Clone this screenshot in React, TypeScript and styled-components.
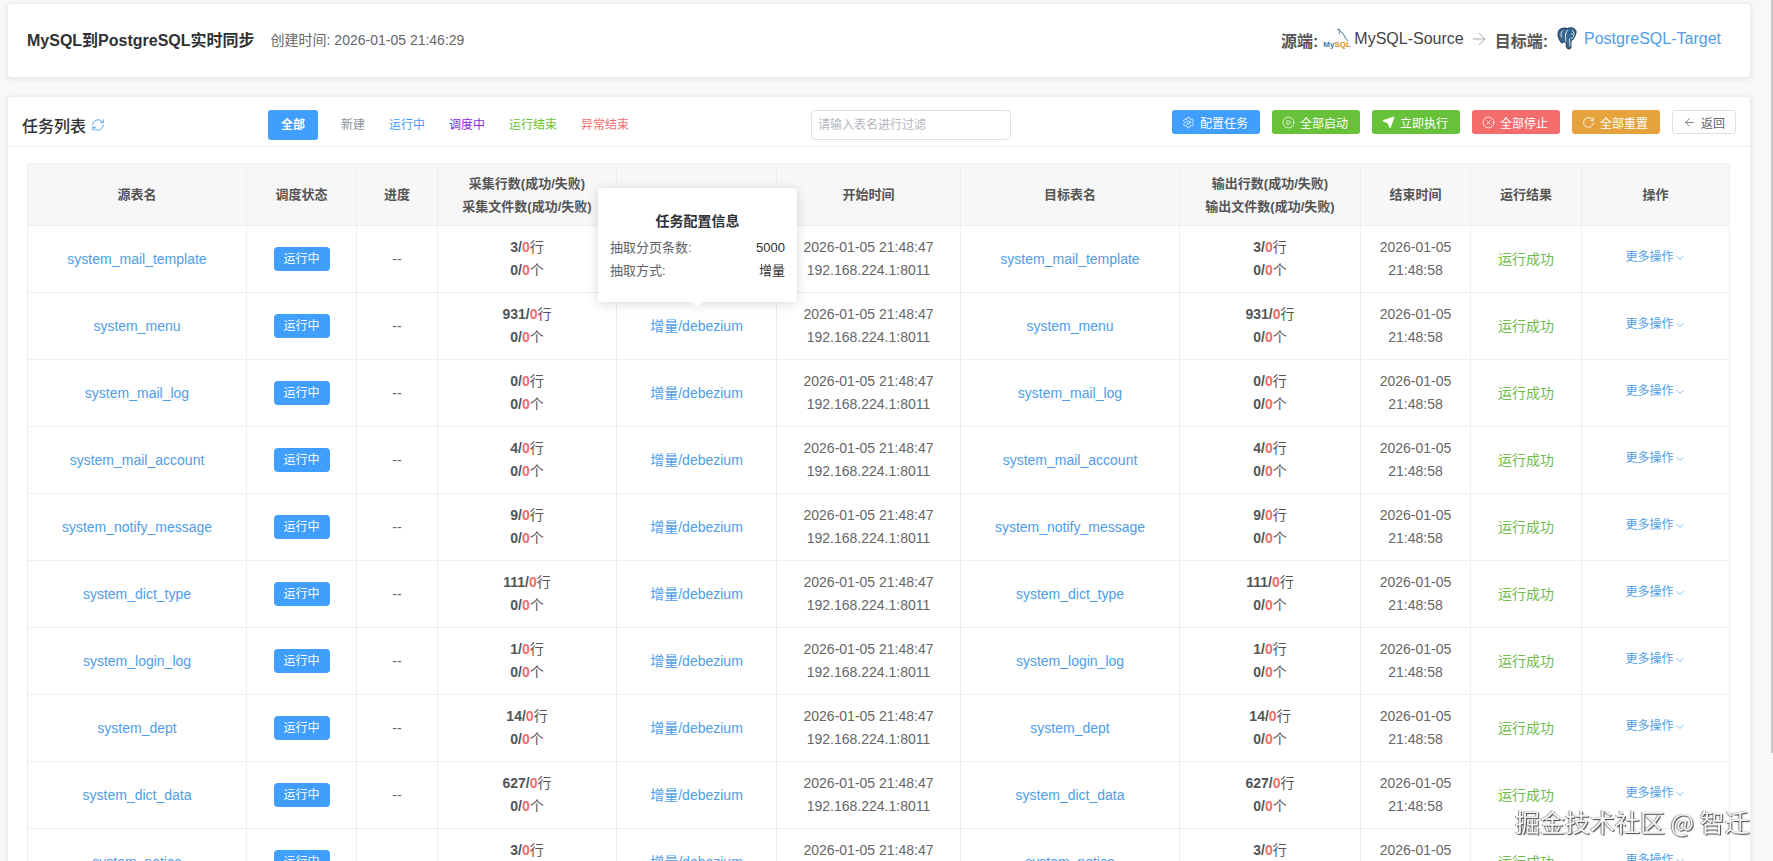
import React from "react";
import styled, { createGlobalStyle } from "styled-components";
import { Settings, CirclePlay, Send, CircleX, RotateCw, ArrowLeft, RefreshCw, ChevronDown, ArrowRight } from "lucide-react";

const Global = createGlobalStyle`
  html, body { margin: 0; height: 100%; overflow: hidden; background: #f8f8f8; }
  body { font-family: "Liberation Sans", "Noto Sans CJK SC", sans-serif; font-size: 14px; color: #606266; }
`;

const Page = styled.div`
  height: 861px; overflow: hidden; padding: 3px 22px 0 7px; display: flex; flex-direction: column; gap: 18px; box-sizing: border-box;
`;
const Card = styled.section`
  background: #fff; border: 1px solid #ebeef5; border-radius: 4px; box-shadow: 0 1px 5px rgba(0,0,0,.09); flex: none;
`;
const TopBar = styled(Card)`
  height: 75px; box-sizing: border-box; display: flex; align-items: center; justify-content: space-between; padding: 0 29px 4px 19px;
`;
const TitleGroup = styled.div`display: flex; align-items: center; gap: 16px;`;
const JobTitle = styled.h1`margin: 0; font-size: 16px; font-weight: 700; color: #303133;`;
const Created = styled.span`font-size: 14px; color: #666;`;
const Endpoints = styled.div`display: flex; align-items: center; color: #303133; font-size: 16px;`;
const EndLabel = styled.span`font-weight: 700; color: #555; margin-top: 3px;`;
const EndName = styled.span<{ $link?: boolean }>`color: ${p => (p.$link ? "#4f9de8" : "#444")};`;
const LogoBox = styled.span<{ $gap: number; $after: number }>`display: inline-flex; align-items: center; margin: 0 ${p => p.$after}px 0 ${p => p.$gap}px;`;
const MysqlMark = styled.span`position: relative; display: inline-block; width: 26px; height: 22px;`;
const MysqlWord = styled.span`
  position: absolute; left: 0; bottom: 1px; font-size: 8px; font-weight: 700; line-height: 9px; color: #3d7a9b; white-space: nowrap;
  b { color: #e08a1e; font-weight: 700; }
`;
const MysqlFin = styled.svg`position: absolute; right: 0; top: 0;`;
const ArrowBox = styled.span`display: inline-flex; color: #999; margin: 0 6px 0 5px;`;

const ListCard = styled(Card)`flex: 1 0 auto;`;
const Toolbar = styled.div`
  height: 50px; display: flex; align-items: flex-start; padding: 13px 14px 0 14px; box-sizing: border-box; border-bottom: 1px solid #ebeef5; position: relative;
`;
const ListTitle = styled.h2`margin: 0; width: 246px; display: flex; align-items: center; gap: 5px; font-size: 16px; font-weight: 500; color: #303133; height: 30px;`;
const Filters = styled.nav`display: flex; align-items: center; height: 30px; width: 543px;`;
const Filter = styled.span<{ $color: string; $active?: boolean }>`
  font-size: 12px; line-height: 30px; padding: 0 ${p => (p.$active ? "13px" : "0")}; margin-right: ${p => (p.$active ? "23px" : "24px")};
  color: ${p => (p.$active ? "#fff" : p.$color)}; background: ${p => (p.$active ? "#409eff" : "transparent")}; border-radius: 3px;
  font-weight: ${p => (p.$active ? 700 : 400)};
`;
const Search = styled.input`
  width: 200px; height: 30px; box-sizing: border-box; border: 1px solid #dcdfe6; border-radius: 4px; padding: 0 6px; font-size: 12px; font-family: inherit; flex: none;
  &::placeholder { color: #b4b7bd; }
`;
const Actions = styled.div`margin-left: auto; display: flex; gap: 12px;`;
const ActionButton = styled.button<{ $bg: string }>`
  width: 88px; height: 24px; display: inline-flex; align-items: center; justify-content: center; gap: 5px; padding: 0 2px 0 0; border: 0; border-radius: 3px;
  background: ${p => p.$bg}; color: #fff; font-size: 12px; font-family: inherit;
`;
const BackButton = styled.button`
  width: 64px; height: 24px; display: inline-flex; align-items: center; justify-content: center; gap: 5px; padding: 0; border: 1px solid #dcdfe6; border-radius: 3px;
  background: #fff; color: #606266; font-size: 12px; font-family: inherit;
`;

const TableWrap = styled.div`padding: 16px 20px 0 19px; position: relative;`;
const Table = styled.table`
  width: 1702px; table-layout: fixed; border-collapse: collapse; text-align: center;
  th, td { border: 1px solid #ebeef5; padding: 0; }
`;
const Th = styled.th`background: #f7f7f8; height: 61px; font-size: 13px; font-weight: 700; color: #555; line-height: 23px;`;
const Td = styled.td`height: 66px; line-height: 23px; font-size: 14px; color: #666;`;
const Link = styled.span`color: #4f9de8;`;
const StatusTag = styled.span`
  display: inline-block; width: 56px; height: 24px; line-height: 24px; border-radius: 4px; background: #409eff; color: #fff; font-size: 12px; vertical-align: middle;
`;
const Count = styled.div`font-weight: 700; color: #555; span { color: #f56c6c; } i { font-style: normal; font-weight: 400; }`;
const Success = styled.span`color: #72bb4e;`;
const More = styled.span`color: #4f9de8; font-size: 12px; display: inline-flex; align-items: center; position: relative; top: -2px;`;

const Popover = styled.div`
  position: absolute; left: 590px; top: 41px; width: 199px; height: 114px; box-sizing: border-box; padding: 21px 12px 0; background: #fff; border-radius: 4px;
  box-shadow: 0 2px 12px rgba(0,0,0,.15); font-size: 13px; line-height: 23px; color: #606266;
  &::after { content: ""; position: absolute; left: 93px; bottom: -5px; width: 0; height: 0; border: 6px solid transparent; border-bottom: 0; border-top-color: #fff; }
`;
const PopTitle = styled.div`font-size: 14px; font-weight: 700; color: #303133; text-align: center; line-height: 24px; margin-bottom: 3px;`;
const PopRow = styled.div`display: flex; justify-content: space-between; b { font-weight: 400; color: #303133; }`;

const Watermark = styled.div`
  position: fixed; left: 1515px; top: 806px; font-size: 25px; line-height: 30px; white-space: nowrap; color: #f5f5f5;
  font-family: "Noto Sans CJK SC", sans-serif; text-shadow: 1px 1px 1px #444, -1px 0 1px #888;
`;
const ScrollThumb = styled.div`position: fixed; right: 0; top: 0; width: 2px; height: 753px; background: #c9c9c9;`;

const rows: [string, number][] = [
  ["system_mail_template", 3], ["system_menu", 931], ["system_mail_log", 0], ["system_mail_account", 4], ["system_notify_message", 9],
  ["system_dict_type", 111], ["system_login_log", 1], ["system_dept", 14], ["system_dict_data", 627], ["system_notice", 3],
];
const widths = [219, 110, 81, 179, 160, 184, 219, 181, 110, 111, 148];
const filters: [string, string][] = [["新建", "#909399"], ["运行中", "#409eff"], ["调度中", "#8a2be2"], ["运行结束", "#67c23a"], ["异常结束", "#f56c6c"]];

const Counts = ({ n }: { n: number }) => (
  <>
    <Count>{n}/<span>0</span><i>行</i></Count>
    <Count>0/<span>0</span><i>个</i></Count>
  </>
);

const Elephant = () => (
  <svg width="21" height="23" viewBox="0 0 21 23">
    <path d="M10.500 1.500C7 .5 1.500 1 1 6c-.3 3.500 1.200 7.500 3.200 9.500 1 1 2 .5 2.700-1 .8.8 1.500 1 2.200.8l.1 3.700c.2 2 1.300 3 2.800 3s2.300-1 2-3l-.2-4.500c2-1.300 4.500-5 5.200-8.500.5-3-1.500-4.800-4.600-5.300-1.500-.2-2.900 0-3.900.8z" fill="#336791" stroke="#1f2f44" strokeWidth="0.9" />
    <path d="M6 3.500c-2 1-2.500 4-1.500 7M10.800 3c-2 2-2.700 5-2.200 8 .2 2 .2 3 0 4M15 3.500c2 1 2.500 3 1.500 6-.4 1.500-1.500 2-2.800 1.700M12.500 11.500c0 3 .3 5 .4 8" fill="none" stroke="#e8eef4" strokeWidth="0.9" />
    <circle cx="8.500" cy="7.500" r=".7" fill="#fff" />
    <circle cx="15" cy="7" r=".7" fill="#fff" />
  </svg>
);

export default function App() {
  return (
    <>
      <Global />
      <Page>
        <TopBar>
          <TitleGroup>
            <JobTitle>MySQL到PostgreSQL实时同步</JobTitle>
            <Created>创建时间: 2026-01-05 21:46:29</Created>
          </TitleGroup>
          <Endpoints>
            <EndLabel>源端:</EndLabel>
            <LogoBox $gap={5} $after={5}>
              <MysqlMark>
                <MysqlWord>My<b>SQL</b></MysqlWord>
                <MysqlFin width="14" height="15" viewBox="0 0 14 15">
                  <path d="M2 1c3 1 6 4 8 8 1 2 2 3 3 4M4 1c1 2 1 3 0 5" fill="none" stroke="#3d6f8e" strokeWidth="1" />
                </MysqlFin>
              </MysqlMark>
            </LogoBox>
            <EndName>MySQL-Source</EndName>
            <ArrowBox><ArrowRight size={20} strokeWidth={1} /></ArrowBox>
            <EndLabel>目标端:</EndLabel>
            <LogoBox $gap={9} $after={6}><Elephant /></LogoBox>
            <EndName $link>PostgreSQL-Target</EndName>
          </Endpoints>
        </TopBar>
        <ListCard>
          <Toolbar>
            <ListTitle>任务列表 <RefreshCw size={14} color="#409eff" strokeWidth={1.500} /></ListTitle>
            <Filters>
              <Filter $color="#fff" $active>全部</Filter>
              {filters.map(([t, c]) => <Filter key={t} $color={c}>{t}</Filter>)}
            </Filters>
            <Search placeholder="请输入表名进行过滤" />
            <Actions>
              <ActionButton $bg="#409eff"><Settings size={13} strokeWidth={1.500} />配置任务</ActionButton>
              <ActionButton $bg="#67c23a"><CirclePlay size={13} strokeWidth={1.500} />全部启动</ActionButton>
              <ActionButton $bg="#67c23a"><Send size={13} fill="#fff" strokeWidth={1.500} />立即执行</ActionButton>
              <ActionButton $bg="#f56c6c"><CircleX size={13} strokeWidth={1.500} />全部停止</ActionButton>
              <ActionButton $bg="#e6a23c"><RotateCw size={13} strokeWidth={1.500} />全部重置</ActionButton>
              <BackButton><ArrowLeft size={13} strokeWidth={1.500} />返回</BackButton>
            </Actions>
          </Toolbar>
          <TableWrap>
            <Table>
              <colgroup>{widths.map((w, i) => <col key={i} style={{ width: w }} />)}</colgroup>
              <thead>
                <tr>
                  <Th>源表名</Th><Th>调度状态</Th><Th>进度</Th>
                  <Th>采集行数(成功/失败)<br />采集文件数(成功/失败)</Th>
                  <Th>同步方式</Th><Th>开始时间</Th><Th>目标表名</Th>
                  <Th>输出行数(成功/失败)<br />输出文件数(成功/失败)</Th>
                  <Th>结束时间</Th><Th>运行结果</Th><Th>操作</Th>
                </tr>
              </thead>
              <tbody>
                {rows.map(([name, n]) => (
                  <tr key={name}>
                    <Td><Link>{name}</Link></Td>
                    <Td><StatusTag>运行中</StatusTag></Td>
                    <Td>--</Td>
                    <Td><Counts n={n} /></Td>
                    <Td><Link>增量/debezium</Link></Td>
                    <Td>2026-01-05 21:48:47<br />192.168.224.1:8011</Td>
                    <Td><Link>{name}</Link></Td>
                    <Td><Counts n={n} /></Td>
                    <Td>2026-01-05<br />21:48:58</Td>
                    <Td><Success>运行成功</Success></Td>
                    <Td><More>更多操作<ChevronDown size={12} strokeWidth={1.500} /></More></Td>
                  </tr>
                ))}
              </tbody>
            </Table>
            <Popover>
              <PopTitle>任务配置信息</PopTitle>
              <PopRow><span>抽取分页条数:</span><b>5000</b></PopRow>
              <PopRow><span>抽取方式:</span><b>增量</b></PopRow>
            </Popover>
          </TableWrap>
        </ListCard>
      </Page>
      <ScrollThumb />
      <Watermark>掘金技术社区 @ 智迁</Watermark>
    </>
  );
}
